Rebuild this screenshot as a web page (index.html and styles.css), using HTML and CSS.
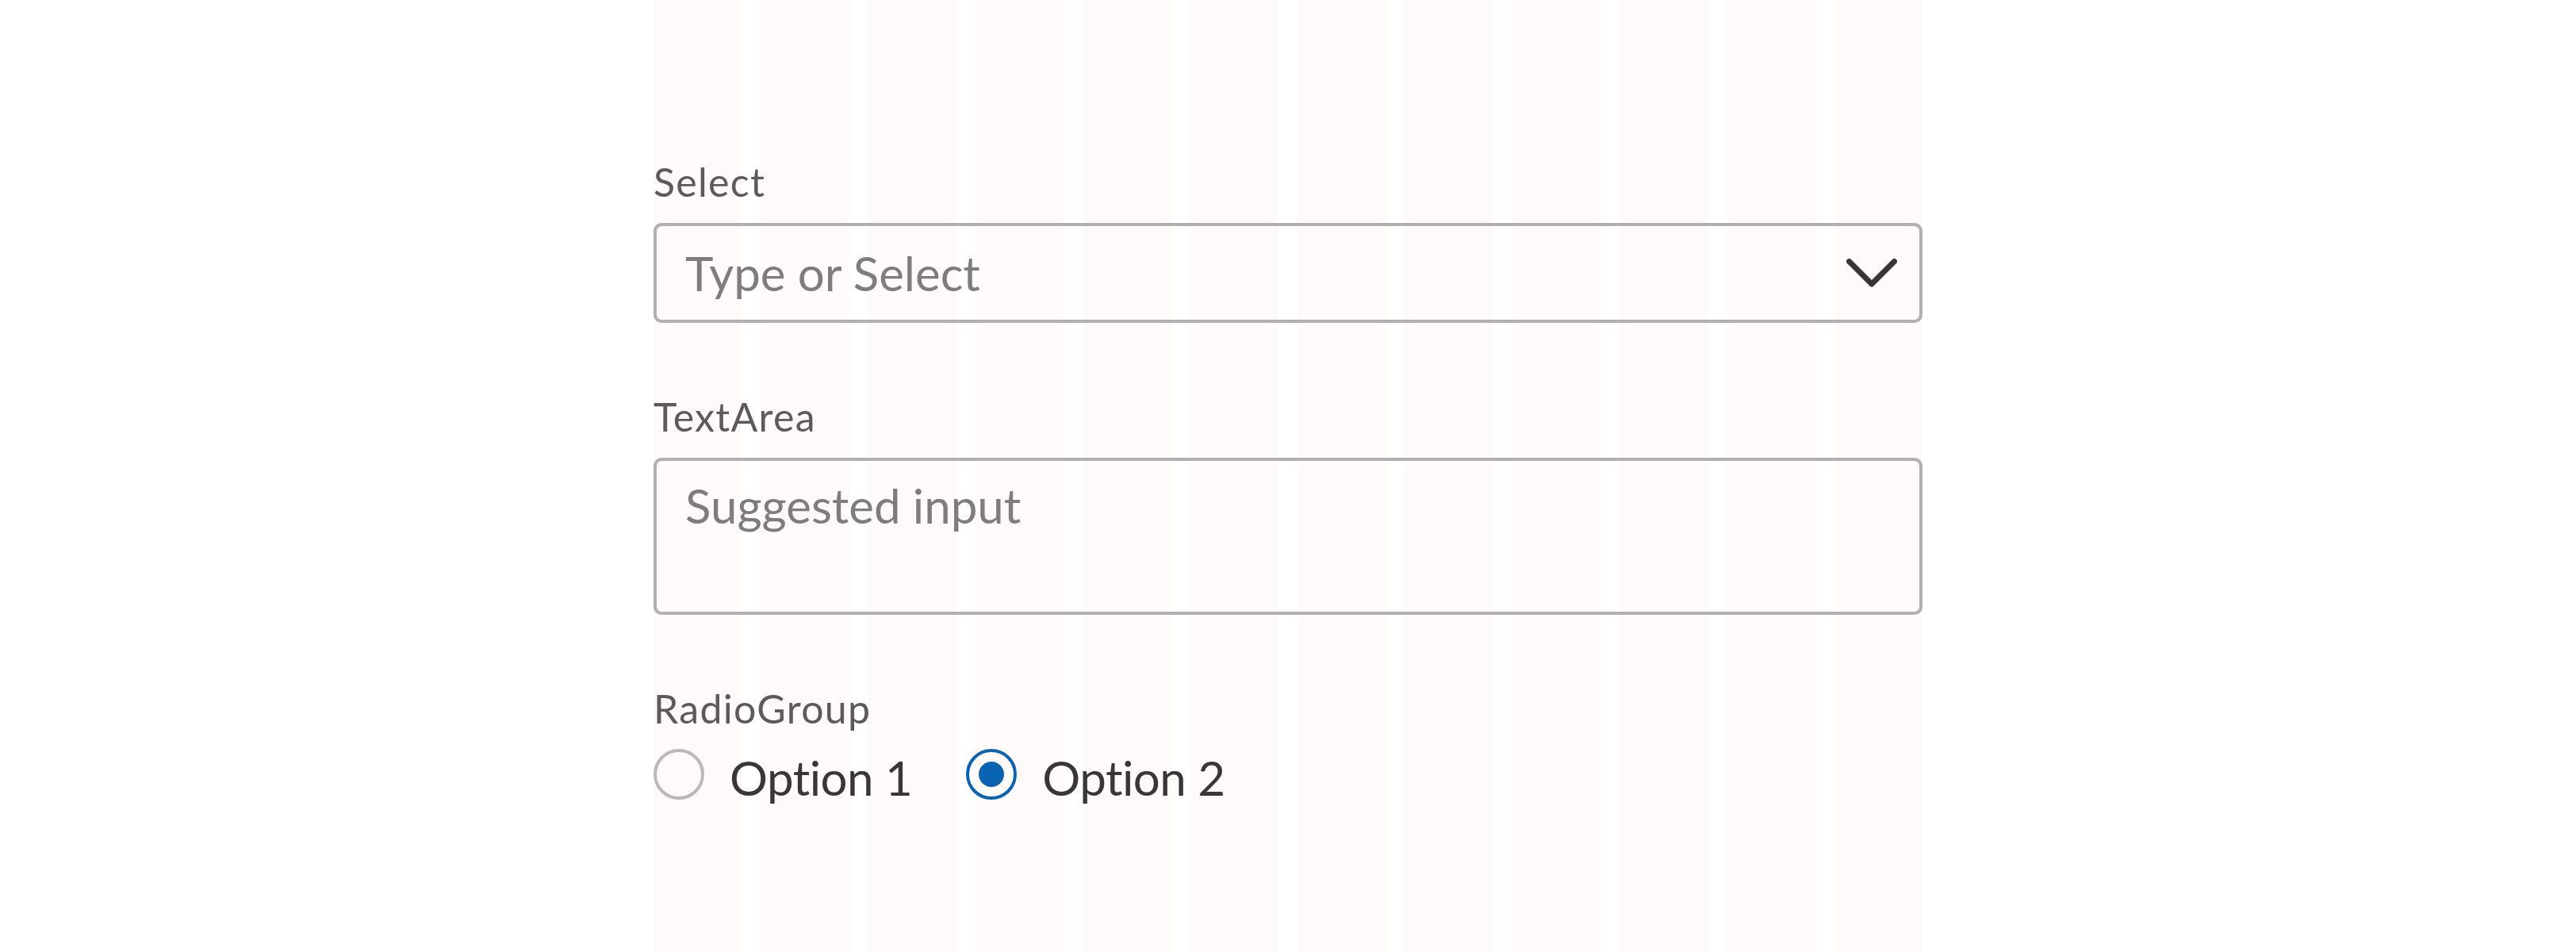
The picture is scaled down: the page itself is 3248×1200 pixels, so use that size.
FILE: index.html
```html
<!DOCTYPE html>
<html lang="en">
<head>
<meta charset="utf-8">
<title>Form</title>
<link rel="stylesheet" href="styles.css">
</head>
<body>
<main class="page">
  <form class="form">
    <div class="field">
      <label class="label" for="sel">Select</label>
      <div class="select">
        <input id="sel" class="control" type="text" placeholder="Type or Select">
        <svg class="chevron" viewBox="0 0 64 36" width="64" height="36" aria-hidden="true"><path d="M3.5 3.5 L32 32 L60.5 3.5" fill="none" stroke="#383535" stroke-width="7" stroke-linecap="round" stroke-linejoin="round"/></svg>
      </div>
    </div>
    <div class="field">
      <label class="label" for="ta">TextArea</label>
      <textarea id="ta" class="textarea" placeholder="Suggested input"></textarea>
    </div>
    <div class="field">
      <span class="label">RadioGroup</span>
      <div class="radios">
        <label class="radio"><span class="dot"></span><span class="radio-text">Option 1</span></label>
        <label class="radio"><span class="dot checked"></span><span class="radio-text">Option 2</span></label>
      </div>
    </div>
  </form>
</main>
</body>
</html>
```
FILE: styles.css
```css
html, body {
  margin: 0;
  padding: 0;
  background: #ffffff;
}
body {
  font-family: Lato, "Noto Sans", sans-serif;
}
.page {
  width: 1600px;
  min-height: 1200px;
  margin: 0 auto;
  background: repeating-linear-gradient(to right, #fffafa 0, #fffafa 111.333px, #ffffff 111.333px, #ffffff 135.333px);
}
.form {
  padding-top: 199px;
}
.field {
  margin-bottom: 88px;
}
.label {
  display: block;
  font-size: 50px;
  line-height: 60px;
  letter-spacing: 1.3px;
  color: #5e5a59;
  margin-bottom: 22px;
}
.select {
  display: flex;
  align-items: center;
  box-sizing: border-box;
  height: 126px;
  border: 4px solid #b3afae;
  border-radius: 10px;
  background: transparent;
}
.control {
  flex: 1;
  min-width: 0;
  border: 0;
  outline: 0;
  background: transparent;
  font-family: Lato, "Noto Sans", sans-serif;
  font-size: 60px;
  line-height: 118px;
  height: 118px;
  padding: 0 0 0 36px;
  color: #3a3636;
}
.control::placeholder, .textarea::placeholder {
  color: #807c7b;
  opacity: 1;
}
.chevron {
  flex: none;
  margin-right: 28px;
}
.textarea {
  display: block;
  box-sizing: border-box;
  width: 100%;
  height: 198px;
  margin: 0;
  border: 4px solid #b3afae;
  border-radius: 10px;
  background: transparent;
  resize: none;
  outline: 0;
  font-family: Lato, "Noto Sans", sans-serif;
  font-size: 60px;
  line-height: 72px;
  padding: 20px 36px 0 36px;
  color: #3a3636;
  overflow: hidden;
}
.radios {
  display: flex;
  align-items: center;
  gap: 68px;
  margin-top: -1px;
}
.radio {
  display: flex;
  align-items: center;
  gap: 32px;
  height: 64px;
}
.dot {
  box-sizing: border-box;
  width: 64px;
  height: 64px;
  border-radius: 50%;
  border: 4px solid #bcb8b7;
  display: flex;
  align-items: center;
  justify-content: center;
}
.dot.checked {
  border-color: #0c63af;
}
.dot.checked::after {
  content: "";
  width: 32px;
  height: 32px;
  border-radius: 50%;
  background: #0a63b0;
}
.radio-text {
  font-size: 60px;
  line-height: 64px;
  letter-spacing: -0.5px;
  padding-top: 8px;
  color: #3a3636;
}
```
